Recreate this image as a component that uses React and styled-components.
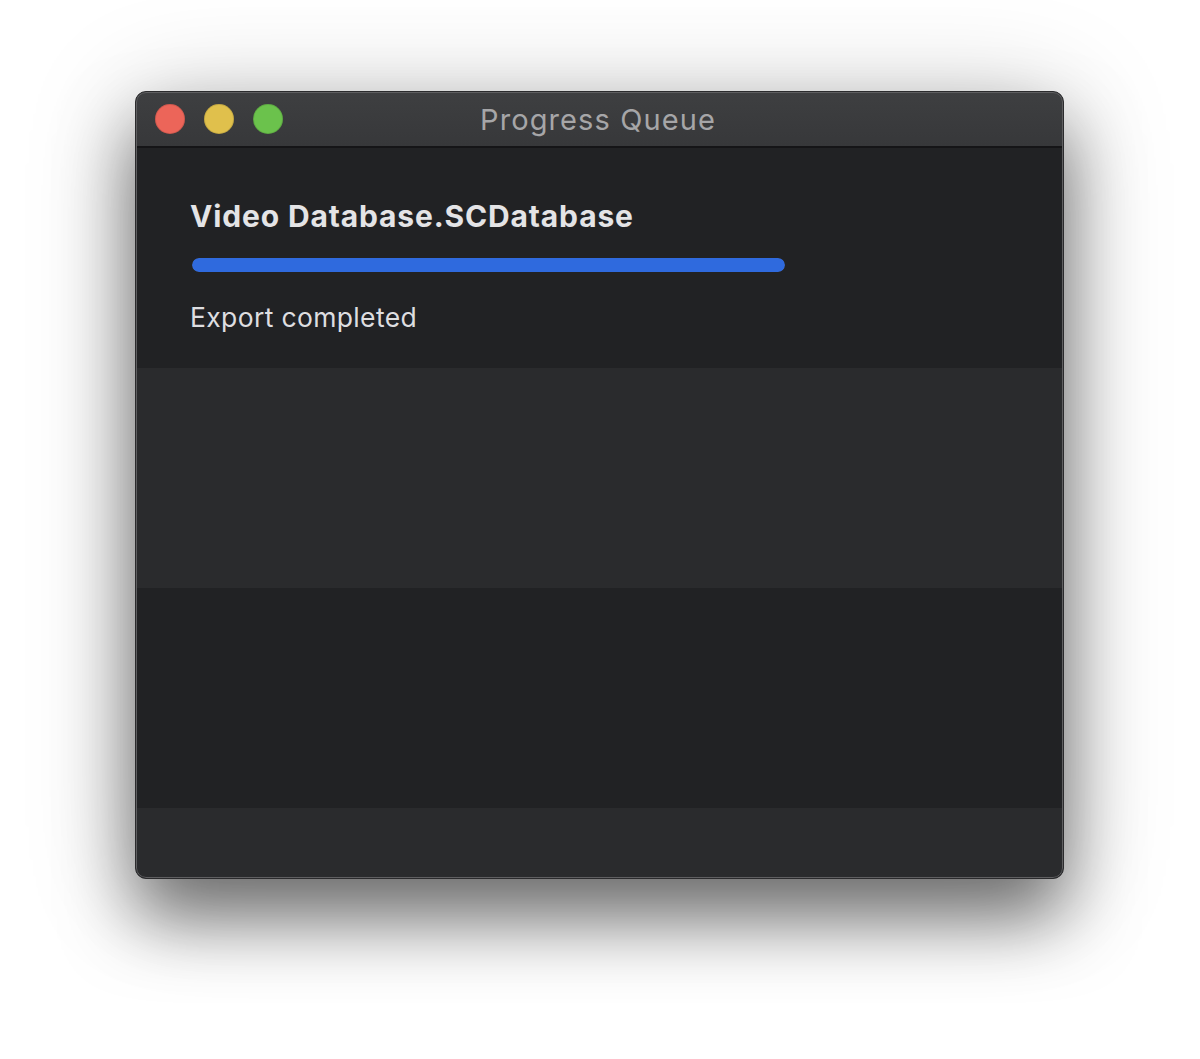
import React from "react";
import styled, { createGlobalStyle } from "styled-components";

const Global = createGlobalStyle`
  html, body { margin: 0; padding: 0; background: #ffffff; }
  body { font-family: Inter, "Noto Sans", sans-serif; -webkit-font-smoothing: antialiased; }
  * { box-sizing: border-box; }
`;

const Page = styled.div`
  width: 1200px;
  height: 1059px;
  display: flex;
  justify-content: flex-start;
  padding-top: 91px;
  padding-left: 135px;
  overflow: hidden;
`;

const Window = styled.div`
  position: relative;
  width: 929px;
  height: 788px;
  border-radius: 11px;
  border: 1px solid #2b2b2d;
  background: #2a2b2d;
  overflow: hidden;
  display: flex;
  flex-direction: column;
  box-shadow: 0 40px 70px rgba(0, 0, 0, 0.5), 0 10px 110px rgba(0, 0, 0, 0.22);
  &::after {
    content: "";
    position: absolute;
    inset: 0;
    border-radius: 10px;
    border: 1px solid #5f5f61;
    pointer-events: none;
  }
`;

const TitleBar = styled.div`
  position: relative;
  height: 56px;
  flex: none;
  display: flex;
  align-items: center;
  padding-left: 19px;
  background: linear-gradient(#3e3f41, #37383a);
  border-bottom: 2px solid #151517;
`;

const Lights = styled.div`
  display: flex;
  gap: 19px;
  margin-top: -1px;
`;

const Light = styled.span`
  width: 30px;
  height: 30px;
  border-radius: 50%;
  background: ${(p) => p.$color};
  box-shadow: inset 0 0 0 1px rgba(0, 0, 0, 0.12);
`;

const Title = styled.div`
  position: absolute;
  left: 0;
  right: 0;
  top: 1px;
  bottom: 0;
  display: flex;
  align-items: center;
  justify-content: center;
  padding-right: 3px;
  color: #a6a6a8;
  font-size: 29px;
  font-weight: 400;
  letter-spacing: 1.1px;
  pointer-events: none;
`;

const Body = styled.div`
  flex: 1;
  display: flex;
  flex-direction: column;
`;

const Row = styled.div`
  height: ${(p) => (p.$fill ? "auto" : "220px")};
  flex: ${(p) => (p.$fill ? "1" : "none")};
  background: ${(p) => (p.$alt ? "#2a2b2d" : "#212224")};
  padding: 50px 54px 0;
  display: flex;
  flex-direction: column;
`;

const FileName = styled.div`
  color: #e4e4e6;
  font-size: 30px;
  font-weight: 700;
  line-height: 36px;
  letter-spacing: 0.85px;
`;

const Track = styled.div`
  margin-top: 24px;
  margin-left: 2px;
  width: 593px;
  height: 14px;
  border-radius: 7px;
  background: #3a3b3d;
  overflow: hidden;
`;

const Fill = styled.div`
  height: 100%;
  border-radius: 7px;
  background: #2f6ade;
`;

const Status = styled.div`
  margin-top: 29px;
  color: #dedee0;
  font-size: 26.5px;
  line-height: 32px;
  font-weight: 400;
  letter-spacing: 0.35px;
`;

export default function App() {
  const progress = 100;
  return (
    <>
      <Global />
      <Page>
        <Window>
          <TitleBar>
            <Lights>
              <Light $color="#ec6559" />
              <Light $color="#e0c04c" />
              <Light $color="#6bc24c" />
            </Lights>
            <Title>Progress Queue</Title>
          </TitleBar>
          <Body>
            <Row>
              <FileName>Video Database.SCDatabase</FileName>
              <Track>
                <Fill style={{ width: `${progress}%` }} />
              </Track>
              <Status>Export completed</Status>
            </Row>
            <Row $alt />
            <Row />
            <Row $alt $fill />
          </Body>
        </Window>
      </Page>
    </>
  );
}
